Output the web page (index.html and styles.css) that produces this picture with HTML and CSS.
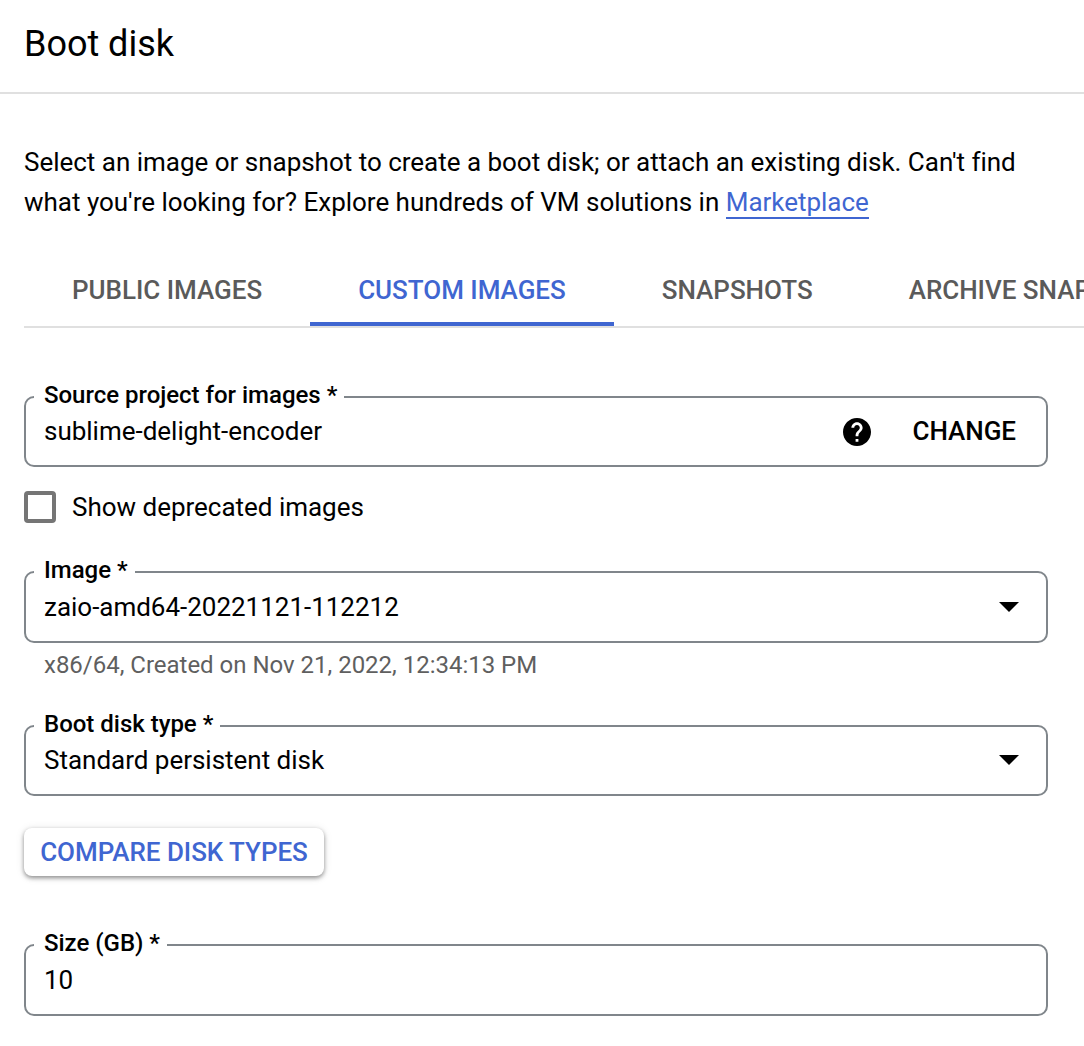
FILE: index.html
```html
<!DOCTYPE html>
<html lang="en">
<head>
<meta charset="utf-8">
<title>Boot disk</title>
<link rel="stylesheet" href="styles.css">
</head>
<body>
<header class="header"><h1>Boot disk</h1></header>
<main class="content">
  <p class="intro">Select an image or snapshot to create a boot disk; or attach an existing disk. Can't find<br>what you're looking for? Explore hundreds of VM solutions in <a class="link" href="#">Marketplace</a></p>
  <nav class="tabs">
    <a class="tab">PUBLIC IMAGES</a>
    <a class="tab active">CUSTOM IMAGES</a>
    <a class="tab">SNAPSHOTS</a>
    <a class="tab">ARCHIVE SNAPSHOTS</a>
  </nav>
  <fieldset class="field source">
    <legend>Source project for images *</legend>
    <span class="value">sublime-delight-encoder</span>
    <svg class="help" viewBox="2 2 20 20"><path d="M12 2C6.480 2 2 6.480 2 12s4.480 10 10 10 10-4.480 10-10S17.520 2 12 2zm1 17h-2v-2h2v2zm2.070-7.750l-.9.920C13.450 12.900 13 13.500 13 15h-2v-.5c0-1.100.45-2.100 1.170-2.830l1.240-1.260c.37-.36.590-.86.590-1.410 0-1.100-.9-2-2-2s-2 .9-2 2H8c0-2.210 1.790-4 4-4s4 1.790 4 4c0 .88-.36 1.680-.93 2.250z"/></svg>
    <button class="change">CHANGE</button>
  </fieldset>
  <label class="check"><span class="box"></span><span>Show deprecated images</span></label>
  <fieldset class="field image">
    <legend>Image *</legend>
    <span class="value">zaio-amd64-20221121-112212</span>
    <svg class="arrow" viewBox="0 0 20 10"><path d="M0 0h20L10 10z"/></svg>
  </fieldset>
  <p class="hint">x86/64, Created on Nov 21, 2022, 12:34:13 PM</p>
  <fieldset class="field type">
    <legend>Boot disk type *</legend>
    <span class="value">Standard persistent disk</span>
    <svg class="arrow" viewBox="0 0 20 10"><path d="M0 0h20L10 10z"/></svg>
  </fieldset>
  <button class="compare">COMPARE DISK TYPES</button>
  <fieldset class="field size">
    <legend>Size (GB) *</legend>
    <span class="value">10</span>
  </fieldset>
</main>
</body>
</html>
```
FILE: styles.css
```css
* { box-sizing: border-box; }
body { margin: 0; height: 1046px; overflow: hidden; background: #fff; color: #000; font: 26px/40px Roboto, sans-serif; letter-spacing: -.015px; }
.header { height: 94px; padding: 20px 24px 0; border-bottom: 2px solid #e0e0e0; }
h1 { margin: 0; font-size: 36px; line-height: 48px; font-weight: 400; }
.content { padding: 48px 36px 0 24px; display: flex; flex-direction: column; }
.intro { margin: 0; white-space: nowrap; height: 80px; }
.link { color: #3f66d1; text-decoration: none; border-bottom: 2px solid #3f66d1; }
.tabs { display: flex; height: 74px; margin: 32px -36px 0 0; border-bottom: 2px solid #e0e0e0; overflow: hidden; }
.tab { flex: none; height: 72px; padding: 0 48px; font-weight: 500; line-height: 73px; letter-spacing: -.02px; color: #5a5a5a; white-space: nowrap; }
.tab.active { color: #3f66d1; border-bottom: 4px solid #3f66d1; }
.field { display: flex; align-items: center; min-width: 0; margin: 0; padding: 0 30px 0 18px; border: 2px solid #80868b; border-radius: 10px; height: 84px; }
legend { margin-left: -10px; padding: 0 7px 0 10px; height: 28px; line-height: 24px; font-size: 24px; font-weight: 500; white-space: nowrap; }
.source { margin-top: 55px; }
.value { flex: 1; line-height: 40px; white-space: nowrap; }
.help { width: 28px; height: 28px; margin: 2px 42px 0 0; }
button { border: 0; background: none; padding: 0; font: 500 26px/40px Roboto, sans-serif; letter-spacing: -.04px; color: #000; white-space: nowrap; }
.check { display: flex; align-items: center; height: 40px; margin-top: 20px; gap: 16px; }
.box { width: 32px; height: 32px; border: 4px solid #757575; border-radius: 4px; }
.image { height: 85px; margin-top: 31px; padding-top: 1px; }
.arrow { width: 20px; height: 10px; margin-right: -3px; }
.hint { margin: 8px 0 0 20px; font-size: 24px; line-height: 28px; color: #5f5f5f; }
.type { margin-top: 33px; }
.compare { width: 300px; height: 48px; margin-top: 32px; border-radius: 8px; color: #3f66d1; box-shadow: 0 2px 4px #0006, 0 1px 10px #0000001a; }
.size { height: 85px; margin-top: 55px; padding-top: 1px; }
```
